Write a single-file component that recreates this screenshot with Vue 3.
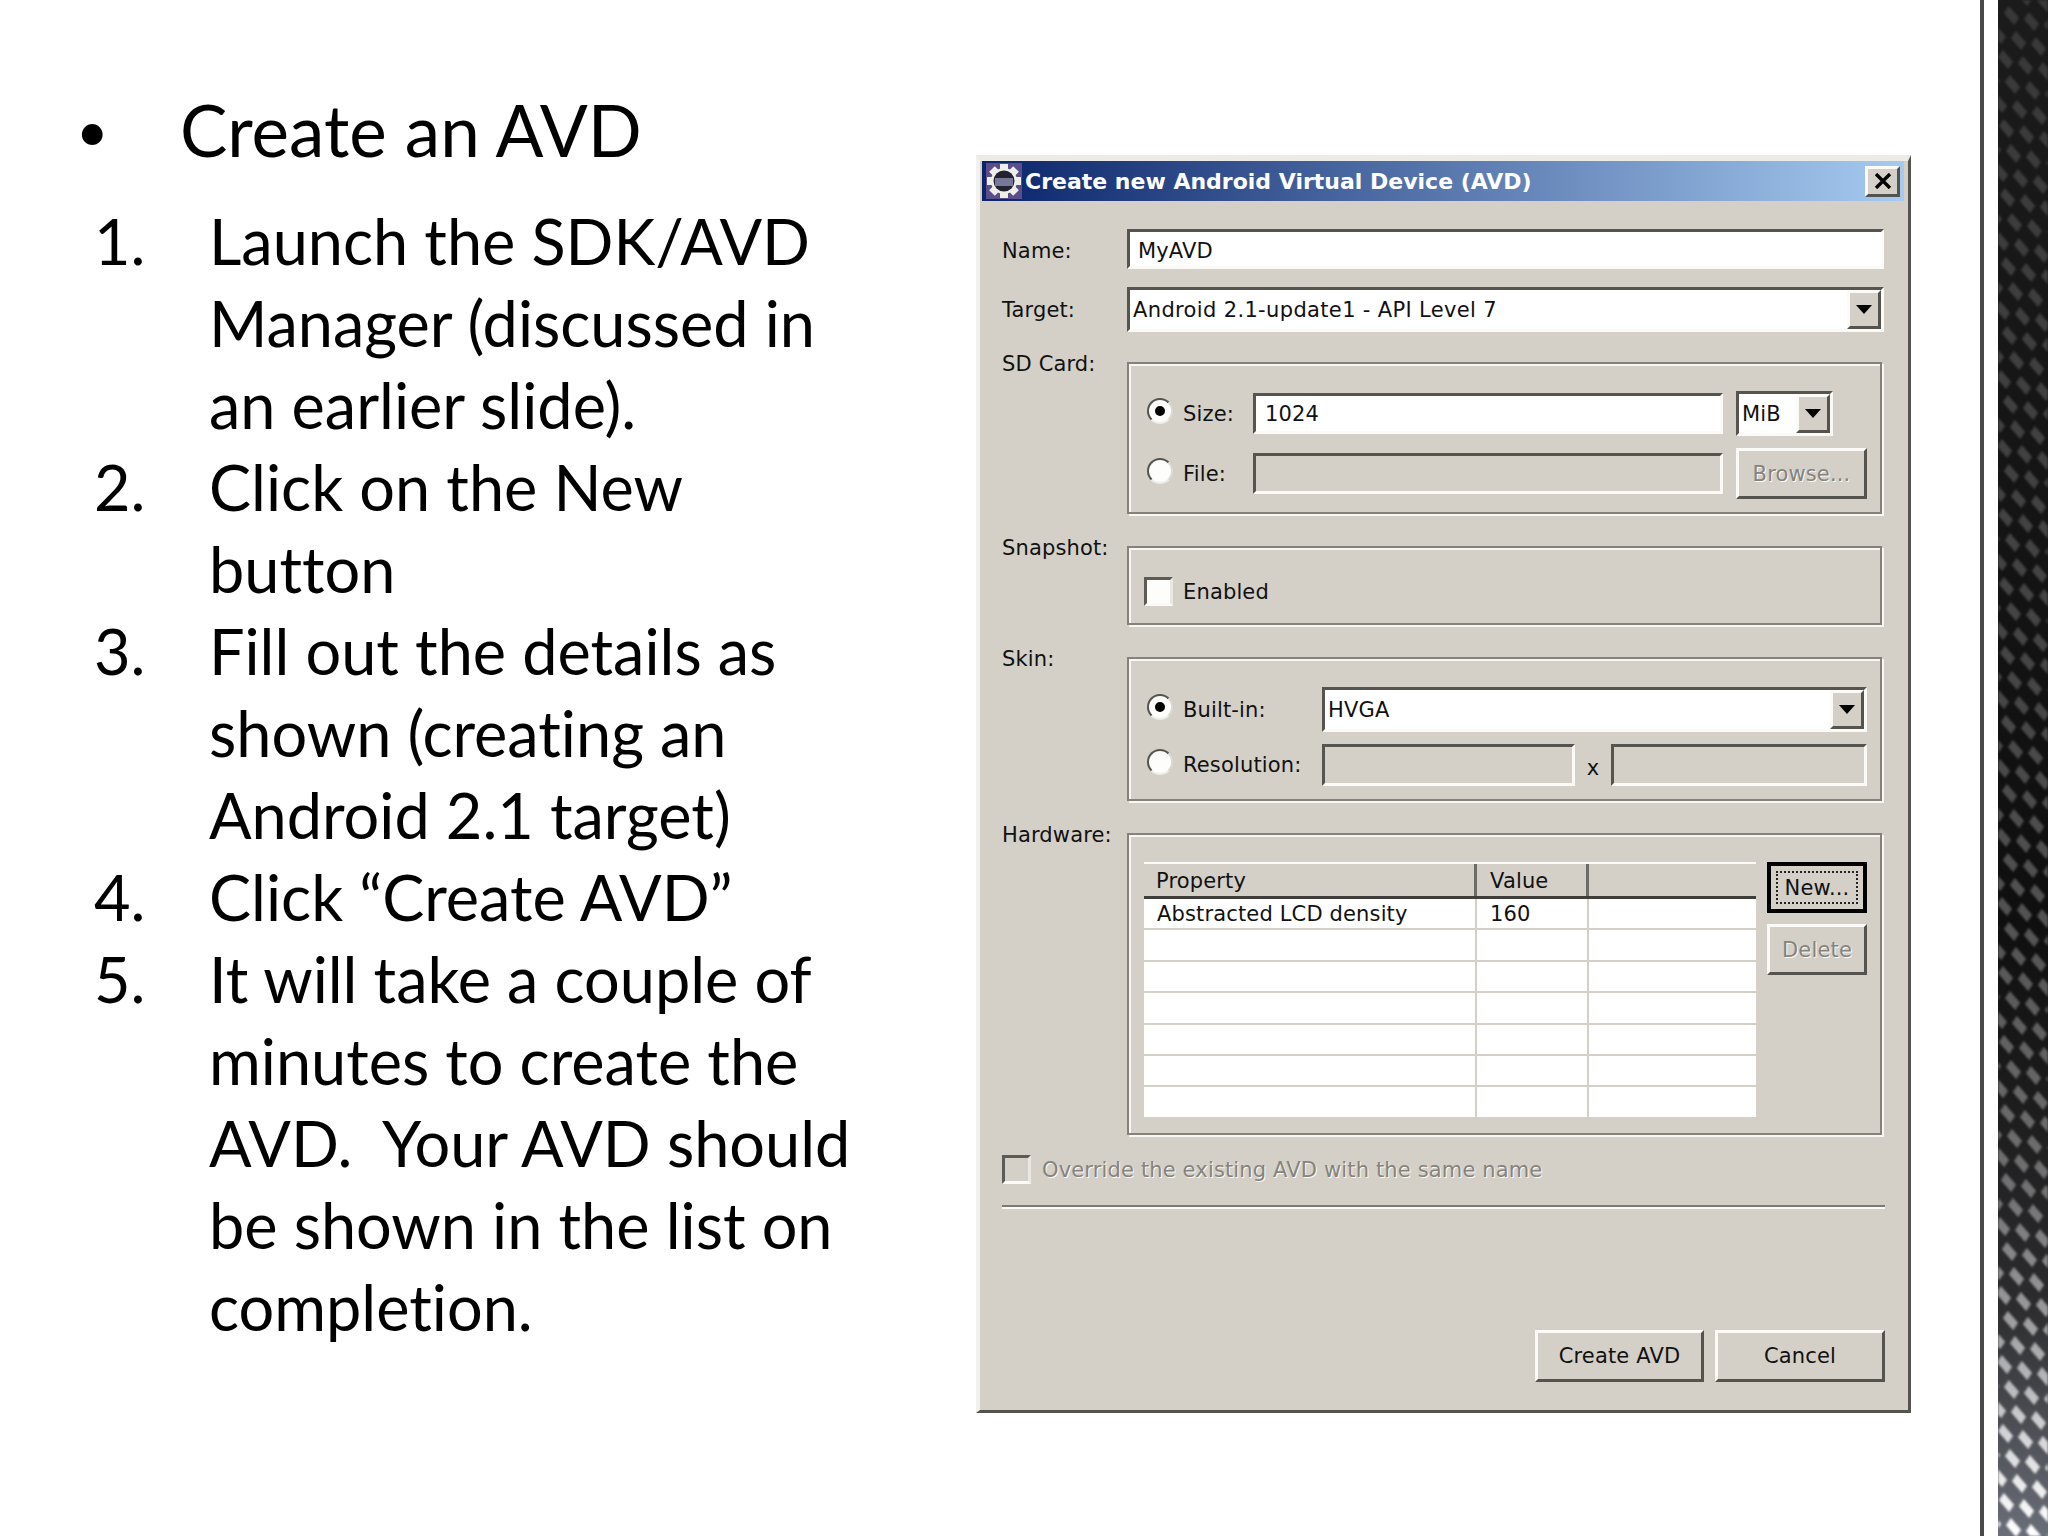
<template>
  <div class="slide">
    <main class="content">
      <section class="notes">
        <div class="heading"><span class="bullet">•</span><span>Create an AVD</span></div>
        <ol class="steps">
          <li v-for="(step, i) in steps" :key="i" class="step">
            <span class="step-num">{{ i + 1 }}.</span>
            <div>
              <span v-for="line in step" :key="line" class="step-line">{{ line }}</span>
            </div>
          </li>
        </ol>
      </section>

      <section class="dialog">
        <header class="titlebar">
          <svg class="app-icon" viewBox="0 0 36 36">
            <rect width="36" height="36" fill="#5b4d8a" />
            <g fill="#efeeea">
              <rect v-for="a in [0, 45, 90, 135]" :key="a" x="14" y="1" width="8" height="34" :transform="`rotate(${a} 18 18)`" />
            </g>
            <circle cx="18" cy="18" r="13" fill="#efeeea" />
            <circle cx="18" cy="18" r="10.5" fill="#23232f" />
            <rect x="9" y="15" width="18" height="8" fill="#77779a" />
          </svg>
          <span class="title">Create new Android Virtual Device (AVD)</span>
          <button class="close raised">
            <svg viewBox="0 0 18 16" width="18" height="16"><path d="M2 1l14 14M16 1L2 15" stroke="#000" stroke-width="3.4" fill="none" /></svg>
          </button>
        </header>

        <div class="body">
          <div class="row row-name">
            <label class="row-label centered">Name:</label>
            <div class="field input-white name-input">MyAVD</div>
          </div>
          <div class="row row-target">
            <label class="row-label centered">Target:</label>
            <div class="field input-white combo target-combo">
              <span class="combo-text">Android 2.1-update1 - API Level 7</span>
              <span class="arrow raised"><i></i></span>
            </div>
          </div>

          <div class="row row-group">
            <label class="row-label">SD Card:</label>
            <div class="group sd-group">
              <div class="option-row">
                <span class="radio checked"></span>
                <span class="option-label size-col">Size:</span>
                <div class="field input-white size-input">1024</div>
                <div class="field input-white combo unit-combo">
                  <span class="combo-text">MiB</span>
                  <span class="arrow raised"><i></i></span>
                </div>
              </div>
              <div class="option-row browse-row">
                <span class="radio"></span>
                <span class="option-label size-col">File:</span>
                <div class="field size-input"></div>
                <button class="btn raised disabled browse">Browse...</button>
              </div>
            </div>
          </div>

          <div class="row row-group">
            <label class="row-label">Snapshot:</label>
            <div class="group snapshot-group">
              <div class="check-row">
                <span class="checkbox"></span>
                <span>Enabled</span>
              </div>
            </div>
          </div>

          <div class="row row-group">
            <label class="row-label">Skin:</label>
            <div class="group skin-group">
              <div class="option-row skin-row">
                <span class="radio checked"></span>
                <span class="option-label skin-col">Built-in:</span>
                <div class="field input-white combo skin-combo">
                  <span class="combo-text">HVGA</span>
                  <span class="arrow raised"><i></i></span>
                </div>
              </div>
              <div class="option-row res-row">
                <span class="radio"></span>
                <span class="option-label skin-col">Resolution:</span>
                <div class="field res-w"></div>
                <span class="times">x</span>
                <div class="field res-h"></div>
              </div>
            </div>
          </div>

          <div class="row row-group">
            <label class="row-label">Hardware:</label>
            <div class="group hardware-group">
              <div class="table">
                <div class="thead">
                  <span class="th col-prop">Property</span>
                  <span class="th col-val">Value</span>
                  <span class="th col-rest"></span>
                </div>
                <div v-for="(r, i) in rows" :key="i" class="tr">
                  <span class="td col-prop">{{ r[0] }}</span>
                  <span class="td col-val">{{ r[1] }}</span>
                  <span class="td col-rest"></span>
                </div>
              </div>
              <div class="side-buttons">
                <button class="btn default-btn"><span>New...</span></button>
                <button class="btn raised disabled delete">Delete</button>
              </div>
            </div>
          </div>

          <div class="override disabled-text">
            <span class="checkbox grey"></span>
            <span>Override the existing AVD with the same name</span>
          </div>
          <div class="separator"></div>
          <footer class="actions">
            <button class="btn raised action">Create AVD</button>
            <button class="btn raised action cancel">Cancel</button>
          </footer>
        </div>
      </section>
    </main>

    <aside class="strip">
      <div class="strip-line"></div>
      <svg class="strip-art" width="50" height="1536">
        <defs>
          <linearGradient id="stripBg" x1="0" y1="0" x2="0" y2="1">
            <stop offset="0" stop-color="#1b1b1b" />
            <stop offset="0.6" stop-color="#0f0f0f" />
            <stop offset="0.85" stop-color="#2c2c2e" />
            <stop offset="1" stop-color="#6a6e78" />
          </linearGradient>
          <linearGradient id="diamondFade" x1="0" y1="0" x2="0" y2="1">
            <stop offset="0" stop-color="#fff" stop-opacity="0.13" />
            <stop offset="0.45" stop-color="#fff" stop-opacity="0.22" />
            <stop offset="0.78" stop-color="#fff" stop-opacity="0.36" />
            <stop offset="0.9" stop-color="#fff" stop-opacity="0.62" />
            <stop offset="1" stop-color="#fff" stop-opacity="1" />
          </linearGradient>
          <pattern id="diamonds" width="1" height="1" patternUnits="userSpaceOnUse" patternTransform="matrix(20 6 7 25 0 0)">
            <polygon points="0.5,0.12 0.88,0.5 0.5,0.88 0.12,0.5" fill="#fff" />
          </pattern>
          <mask id="diamondMask">
            <rect width="50" height="1536" fill="url(#diamondFade)" />
          </mask>
          <filter id="soften"><feGaussianBlur stdDeviation="1.2" /></filter>
        </defs>
        <rect width="50" height="1536" fill="url(#stripBg)" />
        <g mask="url(#diamondMask)">
          <rect width="50" height="1536" fill="url(#diamonds)" filter="url(#soften)" />
        </g>
      </svg>
    </aside>
  </div>
</template>

<script setup>
const steps = [
  ['Launch the SDK/AVD', 'Manager (discussed in', 'an earlier slide).'],
  ['Click on the New', 'button'],
  ['Fill out the details as', 'shown (creating an', 'Android 2.1 target)'],
  ['Click “Create AVD”'],
  ['It will take a couple of', 'minutes to create the', 'AVD.  Your AVD should', 'be shown in the list on', 'completion.']
]

const rows = [
  ['Abstracted LCD density', '160'],
  ['', ''],
  ['', ''],
  ['', ''],
  ['', ''],
  ['', ''],
  ['', '']
]
</script>

<style>
html, body {
  margin: 0;
  background: #fff;
}
</style>

<style scoped>
.slide {
  display: flex;
  width: 2048px;
  height: 1536px;
  overflow: hidden;
  background: #fff;
}

.content {
  display: flex;
  width: 1980px;
  flex: none;
}

/* Slide text */
.notes {
  width: 976px;
  flex: none;
  padding: 89px 0 0 76px;
  box-sizing: border-box;
  font-family: Lato, "Open Sans", sans-serif;
  font-size: 63px;
  line-height: 82px;
  font-variant-ligatures: none;
  color: #000;
}

.heading {
  display: flex;
  margin-bottom: 29px;
  height: 82px;
  font-size: 71px;
}

.bullet {
  width: 104px;
  font-size: 56px;
}

.steps {
  list-style: none;
  margin: 0;
  padding: 0 0 0 18px;
}

.step {
  display: flex;
}

.step-num {
  width: 115px;
  flex: none;
}

.step-line {
  display: block;
  white-space: pre;
}

/* Dialog shell */
.dialog {
  box-sizing: border-box;
  width: 935px;
  height: 1258px;
  margin-top: 155px;
  flex: none;
  display: flex;
  flex-direction: column;
  background: #d4d0c8;
  border-style: solid;
  border-width: 6px 3px 3px 4px;
  border-color: #ecebe7 #55534e #55534e #f2f1ee;
  font-family: "DejaVu Sans", sans-serif;
  font-size: 21px;
  letter-spacing: 0.15px;
  color: #111;
}

.titlebar {
  height: 40px;
  margin: 0 4px 0 2px;
  flex: none;
  display: flex;
  align-items: center;
  padding-left: 4px;
  background: linear-gradient(90deg, #0a246a, #a6caf0);
}

.app-icon {
  width: 36px;
  height: 36px;
  flex: none;
}

.title {
  margin-left: 3px;
  color: #fff;
  font-weight: 700;
  font-size: 22px;
  letter-spacing: 0;
  white-space: nowrap;
}

.close {
  margin-left: auto;
  margin-right: 4px;
  width: 35px;
  height: 31px;
  display: flex;
  align-items: center;
  justify-content: center;
  padding: 0;
}

.raised {
  box-sizing: border-box;
  background: #d4d0c8;
  border-style: solid;
  border-width: 3px;
  border-color: #fbfaf7 #55534e #55534e #fbfaf7;
}

.body {
  flex: 1;
  display: flex;
  flex-direction: column;
  padding: 28px 24px 28px 22px;
  min-height: 0;
}

.row {
  display: flex;
}

.row-name { height: 40px; }
.row-target { height: 45px; margin-top: 18px; }
.row-group { margin-top: 32px; }
.row-target + .row-group { margin-top: 30px; }

.row-label {
  width: 125px;
  flex: none;
  line-height: 26px;
  margin-top: -11px;
}

.row-label.centered {
  margin-top: 0;
  align-self: center;
}

.row-name .row-label {
  padding-top: 3px;
}

/* Sunken fields */
.field {
  box-sizing: border-box;
  border-style: solid;
  border-width: 3px 3px 3px 3px;
  border-color: #56544f #fbfaf7 #fbfaf7 #56544f;
  display: flex;
  align-items: center;
  white-space: nowrap;
}

.input-white {
  background: #fff;
}

.name-input {
  flex: 1;
  padding: 3px 0 0 8px;
}

.combo {
  padding: 0;
  justify-content: space-between;
}

.target-combo {
  flex: 1;
  letter-spacing: 0.35px;
}

.combo-text {
  padding: 1px 0 0 3px;
}

.arrow {
  display: flex;
  align-items: center;
  justify-content: center;
  flex: none;
  width: 34px;
  height: 100%;
}

.arrow i {
  width: 0;
  height: 0;
  border-left: 8px solid transparent;
  border-right: 8px solid transparent;
  border-top: 9px solid #000;
}

/* Etched groups */
.group {
  box-sizing: border-box;
  flex: 1;
  margin-right: 2px;
  border: 2px solid #84827b;
  box-shadow: inset 2px 2px 0 #f8f7f4, 2px 2px 0 #f8f7f4;
}

.sd-group {
  height: 152px;
  padding: 27px 0 0 18px;
}

.snapshot-group {
  height: 79px;
  padding: 29px 0 0 15px;
}

.skin-group {
  height: 144px;
  padding: 28px 0 0 18px;
}

.hardware-group {
  height: 302px;
  padding: 27px 0 0 15px;
  display: flex;
  align-items: flex-start;
  gap: 11px;
}

.option-row {
  display: flex;
  align-items: center;
  height: 45px;
}

.browse-row {
  height: 51px;
  margin-top: 12px;
}

.radio {
  box-sizing: border-box;
  position: relative;
  flex: none;
  width: 26px;
  height: 26px;
  margin-top: -6px;
  border-radius: 50%;
  background: #fdfdfb;
  border: 2px solid;
  border-color: #55534e #dcdad4 #eeede9 #55534e;
}

.radio.checked::after {
  content: "";
  position: absolute;
  left: 6px;
  top: 6px;
  width: 10px;
  height: 10px;
  border-radius: 50%;
  background: #000;
}

.option-label {
  flex: none;
  margin-left: 10px;
}

.size-col {
  width: 70px;
}

.skin-col {
  width: 139px;
}

.size-input {
  width: 470px;
  height: 41px;
  padding: 1px 0 0 9px;
  margin-right: 13px;
}

.unit-combo {
  width: 97px;
  height: 45px;
}

.browse {
  width: 131px;
  height: 51px;
}

.check-row {
  display: flex;
  align-items: center;
  gap: 10px;
}

.checkbox {
  box-sizing: border-box;
  flex: none;
  width: 29px;
  height: 29px;
  background: #fdfdfb;
  border-style: solid;
  border-width: 3px;
  border-color: #5d5b56 #e9e8e3 #fbfaf7 #5d5b56;
}

.checkbox.grey {
  background: #d4d0c8;
}

.skin-row {
  height: 45px;
}

.res-row {
  height: 42px;
  margin-top: 12px;
}

.skin-combo {
  width: 545px;
  height: 45px;
}

.res-w {
  width: 253px;
  height: 42px;
}

.times {
  width: 36px;
  text-align: center;
  padding-top: 6px;
}

.res-h {
  width: 256px;
  height: 42px;
}

/* Hardware table */
.table {
  width: 612px;
  flex: none;
}

.thead {
  display: flex;
  height: 37px;
  box-sizing: border-box;
  border-top: 2px solid #fbfaf7;
  border-bottom: 3px solid #3f3e3a;
}

.th {
  box-sizing: border-box;
  line-height: 34px;
  padding-left: 12px;
  border-right: 3px solid #6d6b66;
}

.th.col-val {
  padding-left: 13px;
}

.th.col-rest {
  border-right: 0;
}

.col-prop { width: 333px; }
.col-val { width: 112px; }
.col-rest { width: 167px; }

.tr {
  display: flex;
  height: 31.4px;
  box-sizing: border-box;
  background: #fff;
  border-bottom: 2px solid #d4d0c8;
}

.td {
  box-sizing: border-box;
  line-height: 30px;
  padding-left: 13px;
  border-right: 2px solid #d4d0c8;
  white-space: nowrap;
}

.td.col-rest {
  border-right: 0;
}

.side-buttons {
  display: flex;
  flex-direction: column;
  gap: 11px;
}

.btn {
  font: inherit;
  letter-spacing: inherit;
  color: inherit;
  padding: 0;
  cursor: default;
}

.disabled {
  color: #85837d;
  text-shadow: 1px 1px 0 #fbfaf7;
}

.default-btn {
  box-sizing: border-box;
  width: 100px;
  height: 51px;
  background: #d4d0c8;
  border: 4px solid #000;
  padding: 5px;
}

.default-btn span {
  display: flex;
  align-items: center;
  justify-content: center;
  box-sizing: border-box;
  height: 100%;
  border: 2px dotted #222;
}

.delete {
  width: 100px;
  height: 51px;
}

.override {
  display: flex;
  align-items: center;
  gap: 11px;
  margin-top: 20px;
  height: 29px;
}

.disabled-text {
  color: #85837d;
  text-shadow: 1px 1px 0 #fbfaf7;
}

.separator {
  height: 4px;
  margin-top: 21px;
  margin-right: -1px;
  box-sizing: border-box;
  border-top: 2px solid #7c7a74;
  border-bottom: 2px solid #fbfaf7;
}

.actions {
  display: flex;
  justify-content: flex-end;
  gap: 11px;
  margin-top: auto;
  margin-right: -1px;
}

.action {
  width: 169px;
  height: 52px;
}

.cancel {
  width: 170px;
}

/* Right decorative strip */
.strip {
  flex: 1;
  display: flex;
}

.strip-line {
  width: 4px;
  flex: none;
  background: #4a4a4a;
  margin-right: 14px;
}

.strip-art {
  flex: none;
  display: block;
}
</style>
